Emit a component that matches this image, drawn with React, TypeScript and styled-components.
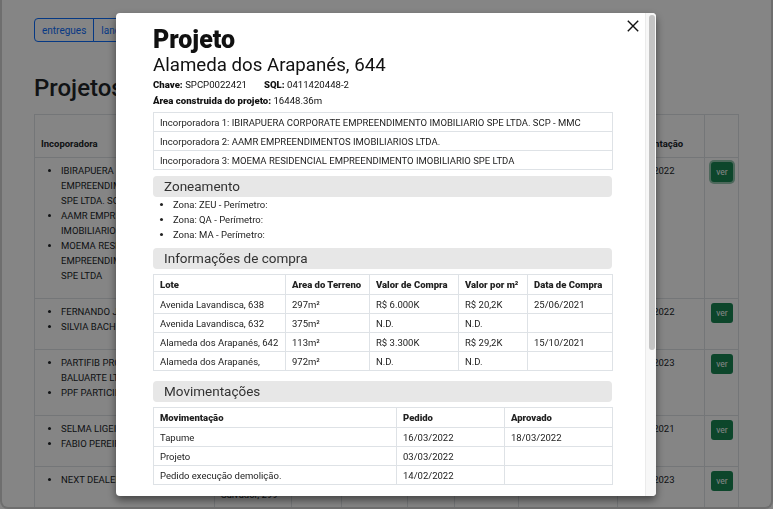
import React from 'react';
import styled, { createGlobalStyle } from 'styled-components';

const GlobalStyle = createGlobalStyle`
  html, body { margin: 0; padding: 0; }
  body {
    font-family: Roboto, "Noto Sans", sans-serif;
    color: #212529;
    background: #fff;
  }
  * { box-sizing: border-box; }
`;

const Frame = styled.div`
  width: 773px;
  height: 509px;
  overflow: hidden;
  background: #fff;
  border: 2px solid #d4d4d4;
  border-top: none;
  border-radius: 0 0 8px 8px;
  padding: 18px 0 0 32px;
`;

const ButtonGroup = styled.div`
  display: inline-flex;
`;

const ToggleButton = styled.button<{ $first?: boolean; $last?: boolean }>`
  height: 24px;
  padding: 0 7px;
  font-family: inherit;
  font-size: 10px;
  color: #0d6efd;
  background: transparent;
  border: 1px solid #0d6efd;
  margin-left: ${p => (p.$first ? '0' : '-1px')};
  border-radius: ${p => (p.$first ? '4px 0 0 4px' : p.$last ? '0 4px 4px 0' : '0')};
`;

const PageTitle = styled.h1`
  margin: 31px 0 11px;
  font-size: 24px;
  font-weight: 500;
  line-height: 30px;
`;

const ListTable = styled.table`
  width: 704px;
  border-collapse: collapse;
  table-layout: fixed;
  font-size: 9.5px;
  border: 1px solid #dee2e6;
`;

const HeadCell = styled.th`
  height: 40px;
  padding: 6px;
  text-align: left;
  vertical-align: bottom;
  font-weight: 700;
  line-height: 15px;
  border: 1px solid #dee2e6;
`;

const BodyCell = styled.td`
  padding: 5px 6px 15px;
  vertical-align: top;
  line-height: 15px;
  border: 1px solid #dee2e6;
`;

const NameList = styled.ul`
  margin: 0;
  padding-left: 20px;
  text-transform: uppercase;
`;

const VerButton = styled.button<{ $focus?: boolean }>`
  display: block;
  width: 22px;
  height: 20px;
  margin-top: -1px;
  padding: 0;
  font-family: inherit;
  font-size: 8.5px;
  color: #fff;
  background: #198754;
  border: none;
  border-radius: 3px;
  box-shadow: ${p => (p.$focus ? '0 0 0 2px rgba(60,153,110,0.55)' : 'none')};
`;

const Backdrop = styled.div`
  position: fixed;
  inset: 0;
  background: rgba(0, 0, 0, 0.48);
`;

const Modal = styled.div`
  position: fixed;
  left: 116px;
  top: 13px;
  width: 540px;
  height: 483px;
  background: #fff;
  border-radius: 4px;
  box-shadow: 0 4px 9px rgba(0, 0, 0, 0.5);
  overflow: hidden;
`;

const ModalBody = styled.div`
  height: 100%;
  overflow: hidden;
  padding: 13px 44px 40px 37px;
`;

const ScrollTrack = styled.div`
  position: absolute;
  top: 0;
  right: 0;
  bottom: 0;
  width: 11px;
  background: #f7f7f7;
  border-left: 1px solid #ebebeb;
`;

const ScrollThumb = styled.div`
  margin: 2px 0 0 3px;
  width: 6px;
  height: 335px;
  background: #c4c4c4;
  border-radius: 3px;
`;

const CloseButton = styled.button`
  position: absolute;
  top: 7px;
  right: 17px;
  width: 12px;
  height: 12px;
  padding: 0;
  border: none;
  background: transparent;
  display: flex;
`;

const Title = styled.h2`
  margin: 0;
  font-size: 25px;
  font-weight: 900;
  line-height: 28px;
  color: #111;
`;

const Address = styled.div`
  font-size: 18.7px;
  line-height: 23px;
  color: #111;
`;

const MetaRow = styled.div<{ $gap?: number }>`
  display: flex;
  gap: ${p => p.$gap ?? 0}px;
  font-size: 9.6px;
  line-height: 16px;
  color: #111;
`;

const Label = styled.b`
  font-weight: 900;
`;

const InfoTable = styled.table<{ $mt: number }>`
  width: 459px;
  border-collapse: collapse;
  table-layout: fixed;
  font-size: 9.5px;
  margin-top: ${p => p.$mt}px;
  color: #222;
`;

const Cell = styled.td`
  height: 19px;
  padding: 0 6px;
  border: 1px solid #dee2e6;
  line-height: 17px;
  white-space: nowrap;
  overflow: hidden;
`;

const HCell = styled.th`
  height: 20px;
  padding: 0 6px;
  border: 1px solid #dee2e6;
  text-align: left;
  font-weight: 900;
  line-height: 18px;
  white-space: nowrap;
`;

const SectionBar = styled.div<{ $mt: number }>`
  margin-top: ${p => p.$mt}px;
  height: 21px;
  padding-left: 11px;
  background: #e7e7e7;
  border-radius: 4px;
  font-size: 13.5px;
  line-height: 21px;
  color: #333;
`;

const ZoneList = styled.ul`
  margin: 0;
  padding-left: 20px;
  font-size: 9.5px;
  line-height: 15px;
  color: #222;
`;

const incorporadoras = [
  'Incorporadora 1: IBIRAPUERA CORPORATE EMPREENDIMENTO IMOBILIARIO SPE LTDA. SCP - MMC',
  'Incorporadora 2: AAMR EMPREENDIMENTOS IMOBILIARIOS LTDA.',
  'Incorporadora 3: MOEMA RESIDENCIAL EMPREENDIMENTO IMOBILIARIO SPE LTDA',
];

const lotes = [
  ['Avenida Lavandisca, 638', '297m²', 'R$ 6.000K', 'R$ 20,2K', '25/06/2021'],
  ['Avenida Lavandisca, 632', '375m²', 'N.D.', 'N.D.', ''],
  ['Alameda dos Arapanés, 642', '113m²', 'R$ 3.300K', 'R$ 29,2K', '15/10/2021'],
  ['Alameda dos Arapanés,', '972m²', 'N.D.', 'N.D.', ''],
];

const movs = [
  ['Tapume', '16/03/2022', '18/03/2022'],
  ['Projeto', '03/03/2022', ''],
  ['Pedido execução demolição.', '14/02/2022', ''],
];

const alvaras = [
  ['Alvará de Demolição', '10/01/2022', '02/02/2022'],
  ['Alvará de Aprovação', '20/12/2021', '14/01/2022'],
  ['Alvará de Execução', '05/11/2021', ''],
  ['Certidão de Uso do Solo', '18/10/2021', '25/10/2021'],
  ['Consulta Prévia', '01/10/2021', '08/10/2021'],
];

const projetos = [
  {
    names: [
      'IBIRAPUERA CORPORATE EMPREENDIMENTO IMOBILIARIO SPE LTDA. SCP - MMC',
      'AAMR EMPREENDIMENTOS IMOBILIARIOS LTDA.',
      'MOEMA RESIDENCIAL EMPREENDIMENTO IMOBILIARIO SPE LTDA',
    ],
    addr: 'Alameda dos Arapanés, 644',
    date: '14/02/2022',
    focus: true,
  },
  { names: ['FERNANDO JOSE DA SILVA', 'SILVIA BACHIEGA'], addr: 'Rua Canário, 120', date: '03/05/2022' },
  { names: ['PARTIFIB PROPRIEDADES BALUARTE LTDA', 'PPF PARTICIPAÇÕES'], addr: 'Rua Baluarte, 51', date: '11/01/2023' },
  { names: ['SELMA LIGEIRO', 'FABIO PEREIRA'], addr: 'Rua Gaivota, 88', date: '22/09/2021' },
  { names: ['NEXT DEALER'], addr: 'Avenida Salvador, 299', date: '07/03/2023' },
];

const colWidths = [180, 77, 50, 66, 47, 64, 99, 87, 34];
const headers = ['Incoporadora', 'Endereço', 'SQL', 'Área', 'Lotes', 'Zona', 'Alvará', 'Data Apresentação', ''];

function CloseIcon() {
  return (
    <svg width="12" height="12" viewBox="0 0 12 12">
      <path d="M0.8 0.8 L11.2 11.2 M11.2 0.8 L0.8 11.2" stroke="#111" strokeWidth="1.4" />
    </svg>
  );
}

function DataTable({ cols, head, rows, mt }: { cols: number[]; head?: string[]; rows: string[][]; mt: number }) {
  return (
    <InfoTable $mt={mt}>
      <colgroup>
        {cols.map((w, i) => (
          <col key={i} style={{ width: w }} />
        ))}
      </colgroup>
      {head && (
        <thead>
          <tr>
            {head.map(h => (
              <HCell key={h}>{h}</HCell>
            ))}
          </tr>
        </thead>
      )}
      <tbody>
        {rows.map((r, i) => (
          <tr key={i}>
            {r.map((c, j) => (
              <Cell key={j}>{c}</Cell>
            ))}
          </tr>
        ))}
      </tbody>
    </InfoTable>
  );
}

export default function App() {
  return (
    <>
      <GlobalStyle />
      <Frame>
        <ButtonGroup>
          <ToggleButton $first>entregues</ToggleButton>
          <ToggleButton $last>lançamentos</ToggleButton>
        </ButtonGroup>
        <PageTitle>Projetos entregues</PageTitle>
        <ListTable>
          <colgroup>
            {colWidths.map((w, i) => (
              <col key={i} style={{ width: w }} />
            ))}
          </colgroup>
          <thead>
            <tr>
              {headers.map((h, i) => (
                <HeadCell key={i}>{h}</HeadCell>
              ))}
            </tr>
          </thead>
          <tbody>
            {projetos.map((p, i) => (
              <tr key={i}>
                <BodyCell>
                  <NameList>
                    {p.names.map(n => (
                      <li key={n}>{n}</li>
                    ))}
                  </NameList>
                </BodyCell>
                <BodyCell>{p.addr}</BodyCell>
                <BodyCell>—</BodyCell>
                <BodyCell>—</BodyCell>
                <BodyCell>—</BodyCell>
                <BodyCell>—</BodyCell>
                <BodyCell>—</BodyCell>
                <BodyCell>{p.date}</BodyCell>
                <BodyCell>
                  <VerButton $focus={p.focus}>ver</VerButton>
                </BodyCell>
              </tr>
            ))}
          </tbody>
        </ListTable>
      </Frame>
      <Backdrop />
      <Modal>
        <ModalBody>
          <Title>Projeto</Title>
          <Address>Alameda dos Arapanés, 644</Address>
          <MetaRow $gap={17}>
            <span>
              <Label>Chave:</Label> SPCP0022421
            </span>
            <span>
              <Label>SQL:</Label> 0411420448-2
            </span>
          </MetaRow>
          <MetaRow>
            <span>
              <Label>Área construida do projeto:</Label> 16448.36m
            </span>
          </MetaRow>
          <DataTable mt={3} cols={[459]} rows={incorporadoras.map(t => [t])} />

          <SectionBar $mt={6}>Zoneamento</SectionBar>
          <ZoneList>
            <li>Zona: ZEU - Perímetro:</li>
            <li>Zona: QA - Perímetro:</li>
            <li>Zona: MA - Perímetro:</li>
          </ZoneList>

          <SectionBar $mt={6}>Informações de compra</SectionBar>
          <DataTable
            mt={5}
            cols={[132, 84, 89, 69, 85]}
            head={['Lote', 'Area do Terreno', 'Valor de Compra', 'Valor por m²', 'Data de Compra']}
            rows={lotes}
          />

          <SectionBar $mt={10}>Movimentações</SectionBar>
          <DataTable mt={5} cols={[243, 108, 108]} head={['Movimentação', 'Pedido', 'Aprovado']} rows={movs} />

          <SectionBar $mt={14}>Alvarás</SectionBar>
          <DataTable mt={5} cols={[243, 108, 108]} head={['Documento', 'Pedido', 'Emitido']} rows={alvaras} />
        </ModalBody>
        <ScrollTrack>
          <ScrollThumb />
        </ScrollTrack>
        <CloseButton aria-label="Fechar">
          <CloseIcon />
        </CloseButton>
      </Modal>
    </>
  );
}
